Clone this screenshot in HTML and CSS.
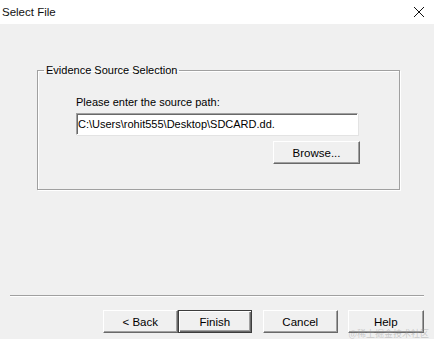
FILE: index.html
```html
<!DOCTYPE html>
<html lang="en">
<head>
    <meta charset="UTF-8">
    <title>Select File</title>
    <link rel="stylesheet" href="styles.css">
</head>
<body>
    <div class="window">
        <!-- Title bar -->
        <div class="title-bar">
            <span class="title">Select File</span>
            <svg class="close" width="12" height="12" viewBox="0 0 12 12">
                <path d="M1 1 L11 11 M11 1 L1 11" stroke="#111" stroke-width="1" fill="none"/>
            </svg>
        </div>

        <div class="content">
            <fieldset class="group">
                <legend>Evidence Source Selection</legend>
                <label for="source-path">Please enter the source path:</label>
                <input type="text" id="source-path" class="path-input" value="C:\Users\rohit555\Desktop\SDCARD.dd.">
                <div class="browse-row">
                    <button class="btn" id="browse">Browse...</button>
                </div>
            </fieldset>
        </div>

        <div class="footer">
            <div class="separator"></div>
            <div class="button-row">
                <button class="btn">&lt; Back</button>
                <button class="btn default">Finish</button>
                <button class="btn spaced">Cancel</button>
                <button class="btn help">Help</button>
            </div>
        </div>

        <span class="watermark">@稀土掘金技术社区</span>
    </div>
</body>
</html>
```

FILE: styles.css
```css
body {
    margin: 0;
    padding: 0;
    font-family: "Liberation Sans", Arial, sans-serif;
    font-size: 11px;
    color: #000;
    background-color: #f0f0f0;
}

.window {
    position: relative;
    width: 434px;
    height: 339px;
    display: flex;
    flex-direction: column;
    background-color: #f0f0f0;
    overflow: hidden;
}

.title-bar {
    height: 24px;
    background-color: #fff;
    display: flex;
    align-items: center;
    justify-content: space-between;
    padding: 0 9px 0 2px;
}

.title {
    font-size: 11.5px;
    color: #111;
}

.close {
    margin-bottom: 1px;
}

.content {
    flex: 1;
    padding: 39px 0 0 37px;
}

.group {
    width: 363px;
    height: 127px;
    box-sizing: border-box;
    margin: 0;
    padding: 18px 0 0 38px;
    border: 1px solid #a0a0a0;
    box-shadow: inset 1px 1px 0 #fff, 1px 1px 0 #fff;
}

.group legend {
    padding: 0 2px;
    margin-left: -32px;
    line-height: 14px;
}

.group label {
    display: block;
    line-height: 14px;
}

.path-input {
    display: block;
    box-sizing: border-box;
    width: 282px;
    height: 22px;
    margin-top: 4px;
    padding: 0 1px;
    font-family: "Liberation Sans", Arial, sans-serif;
    font-size: 11px;
    color: #000;
    background-color: #fff;
    border-top: 1px solid #a0a0a0;
    border-left: 1px solid #a0a0a0;
    border-right: 1px solid #fff;
    border-bottom: 1px solid #fff;
    box-shadow: inset 1px 1px 0 #696969, 1px 1px 0 #e3e3e3;
    outline: none;
}

.browse-row {
    display: flex;
    width: 284px;
    justify-content: flex-end;
    margin-top: 6px;
}

.btn {
    box-sizing: border-box;
    width: 75px;
    height: 23px;
    padding: 0;
    font-family: "Liberation Sans", Arial, sans-serif;
    font-size: 11.5px;
    color: #000;
    background-color: #f0f0f0;
    border-top: 1px solid #fff;
    border-left: 1px solid #fff;
    border-right: 1px solid #696969;
    border-bottom: 1px solid #696969;
    box-shadow: inset -1px -1px 0 #a0a0a0;
}

#browse {
    width: 87px;
}

.btn.default {
    border: 1px solid #3c3c3c;
    box-shadow: inset 1px 1px 0 #fff, inset -1px -1px 0 #696969, inset -2px -2px 0 #a0a0a0;
}

.footer {
    padding: 0 10px 6px 10px;
}

.separator {
    height: 1px;
    background-color: #a0a0a0;
    border-bottom: 1px solid #fff;
}

.button-row {
    display: flex;
    padding: 13px 0 0 93px;
}

.btn.spaced {
    margin-left: 11px;
}

.btn.help {
    margin-left: 10px;
    width: 77px;
}

.watermark {
    position: absolute;
    right: 5px;
    bottom: 0;
    font-family: "Noto Sans CJK SC", sans-serif;
    font-size: 9px;
    line-height: 10px;
    color: rgba(150, 150, 150, 0.45);
}
```
